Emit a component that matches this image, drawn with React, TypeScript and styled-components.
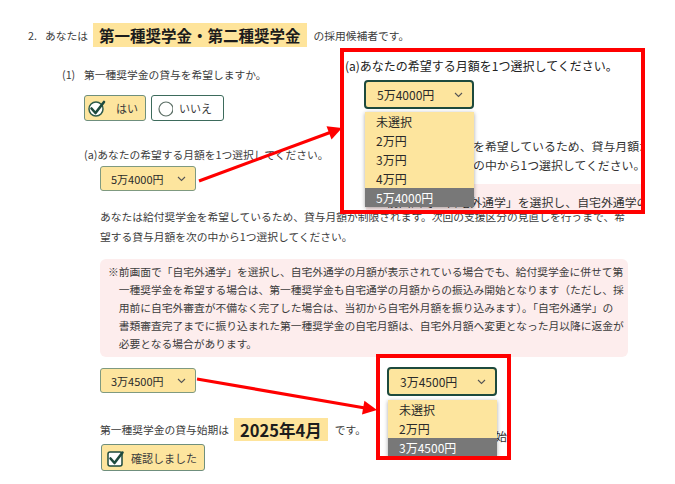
import React from "react";
import styled, { createGlobalStyle } from "styled-components";

const GlobalStyle = createGlobalStyle`
  html, body {
    margin: 0;
    padding: 0;
    background: #fff;
  }
  body {
    font-family: "Noto Sans CJK JP", "Noto Sans", sans-serif;
    color: #3c3c3c;
  }
`;

const YELLOW = "#fde59e";
const DARK_GREEN = "#1d4a3d";

const Screen = styled.div`
  position: relative;
  width: 675px;
  height: 484px;
  overflow: hidden;
  background: #fff;
`;

const Page = styled.div`
  padding: 23px 0 0 28px;
  font-size: 10.75px;
  white-space: nowrap;
`;

const Header = styled.div`
  display: flex;
  align-items: center;
  height: 24px;
`;

const ItemNumber = styled.span`
  width: 17px;
`;

const Highlight = styled.span<{ $size: number; $height: number }>`
  display: inline-flex;
  align-items: center;
  height: ${(p) => p.$height}px;
  padding: 0 6px;
  margin: 0 7px 0 5px;
  background: #fee49b;
  color: #1c1c1c;
  font-weight: 700;
  font-size: ${(p) => p.$size}px;
`;

const Section = styled.div`
  padding-left: 34px;
`;

const QuestionLine = styled.div`
  margin-top: 19px;
  line-height: 18px;
`;

const QuestionNumber = styled.span`
  display: inline-block;
  width: 22px;
`;

const Choices = styled.div`
  display: flex;
  gap: 5px;
  margin: 11px 0 0 22px;
`;

const ChoiceButton = styled.div<{ $selected?: boolean; $width: number }>`
  display: flex;
  align-items: center;
  gap: 6px;
  box-sizing: border-box;
  width: ${(p) => p.$width}px;
  height: 26px;
  padding-left: 3px;
  border: 1px solid ${(p) => (p.$selected ? "#6f8f7d" : "#3d6b5c")};
  border-radius: 3px;
  background: ${(p) => (p.$selected ? YELLOW : "#fff")};
  font-size: 11px;
`;

const SubQuestion = styled.div`
  margin: 25px 0 0 22px;
  line-height: 18px;
`;

const Body = styled.div`
  margin-left: 38px;
`;

const SelectSlot = styled.div<{ $top: number }>`
  margin-top: ${(p) => p.$top}px;
`;

const SelectBox = styled.div<{ $open?: boolean }>`
  display: flex;
  align-items: center;
  justify-content: space-between;
  box-sizing: border-box;
  width: ${(p) => (p.$open ? 110 : 96)}px;
  height: ${(p) => (p.$open ? 29 : 25)}px;
  padding: ${(p) => (p.$open ? "0 9px 0 11px" : "0 9px 0 10px")};
  background: ${YELLOW};
  border: ${(p) => (p.$open ? `2px solid ${DARK_GREEN}` : "1px solid #7f9a80")};
  border-radius: ${(p) => (p.$open ? 4 : 3)}px;
  font-size: ${(p) => (p.$open ? 12 : 11)}px;
  color: #2a2a2a;
`;

const Paragraph = styled.p`
  margin: 16px 0 0;
  line-height: 20px;
`;

const Notice = styled.div`
  box-sizing: border-box;
  width: 528px;
  margin-top: 12px;
  padding: 4px 8px 4px calc(8px + 1em);
  text-indent: -1em;
  line-height: 18px;
  background: #fdeded;
  border-radius: 6px;
`;

const StartLine = styled.div`
  display: flex;
  align-items: center;
  margin-top: 25px;
`;

const ConfirmButton = styled.div`
  display: flex;
  align-items: center;
  gap: 4px;
  box-sizing: border-box;
  width: 104px;
  height: 27px;
  margin: 3px 0 0 1px;
  padding-left: 5px;
  background: ${YELLOW};
  border: 1px solid #6f8f7d;
  border-radius: 3px;
  font-size: 11px;
`;

const Callout = styled.div<{ $left: number; $top: number; $width: number; $height: number }>`
  position: absolute;
  left: ${(p) => p.$left}px;
  top: ${(p) => p.$top}px;
  width: ${(p) => p.$width}px;
  height: ${(p) => p.$height}px;
  box-sizing: border-box;
  border: 4px solid #ff0000;
  background: #fff;
  overflow: hidden;
  white-space: nowrap;
  color: #222;
  font-size: 11.9px;
`;

const CalloutTitle = styled.div`
  margin: 5px 0 0 1px;
  line-height: 18px;
  font-size: 12px;
`;

const CalloutSelect = styled.div<{ $top: number; $left: number }>`
  margin: ${(p) => p.$top}px 0 0 ${(p) => p.$left}px;
`;

const ZoomParagraph = styled.div<{ $top: number; $left: number }>`
  margin: ${(p) => p.$top}px 0 0 ${(p) => p.$left}px;
  line-height: 19px;
  color: #333;
`;

const ZoomNotice = styled.div`
  margin: 10px 0 0 22px;
  padding: 8px 9px;
  line-height: 19px;
  background: #fdeded;
  color: #333;
`;

const Menu = styled.ul<{ $left: number; $top: number }>`
  position: absolute;
  left: ${(p) => p.$left}px;
  top: ${(p) => p.$top}px;
  width: 109px;
  margin: 0;
  padding: 0;
  list-style: none;
  background: ${YELLOW};
  box-shadow: 0 1px 4px rgba(0, 0, 0, 0.35);
`;

const MenuItem = styled.li<{ $selected?: boolean }>`
  height: 19px;
  line-height: 19px;
  padding-left: 11px;
  font-size: 12px;
  background: ${(p) => (p.$selected ? "#787878" : "transparent")};
  color: ${(p) => (p.$selected ? "#fff" : "#2a2a2a")};
`;

const Arrows = styled.svg`
  position: absolute;
  left: 0;
  top: 0;
  pointer-events: none;
`;

const Chevron = () => (
  <svg width="9" height="6" viewBox="0 0 9 6">
    <polyline points="1,1 4.5,4.5 8,1" fill="none" stroke="#555" strokeWidth="1.1" />
  </svg>
);

const CheckCircle = () => (
  <svg width="22" height="18" viewBox="0 0 22 18">
    <circle cx="8" cy="10" r="7" fill="#fff" stroke="#2d5a4a" strokeWidth="1.5" />
    <path d="M3.5 9.5 L7.5 14 L16 3" fill="none" stroke={DARK_GREEN} strokeWidth="2.6" strokeLinecap="round" strokeLinejoin="round" />
  </svg>
);

const EmptyCircle = () => (
  <svg width="18" height="18" viewBox="0 0 18 18">
    <circle cx="11" cy="10" r="7" fill="#fff" stroke="#5c6f66" strokeWidth="1.2" />
  </svg>
);

const CheckBox = () => (
  <svg width="20" height="18" viewBox="0 0 20 18">
    <rect x="1" y="3" width="14" height="14" rx="2" fill="#fff" stroke={DARK_GREEN} strokeWidth="1.5" />
    <path d="M3.5 9.5 L7.5 14 L15.5 3.5" fill="none" stroke={DARK_GREEN} strokeWidth="2.6" strokeLinecap="round" strokeLinejoin="round" />
  </svg>
);

const Select: React.FC<{ value: string; open?: boolean }> = ({ value, open }) => (
  <SelectBox $open={open}>
    <span>{value}</span>
    <Chevron />
  </SelectBox>
);

export default function App() {
  return (
    <Screen>
      <GlobalStyle />
      <Page>
        <Header>
          <ItemNumber>2.</ItemNumber>
          <span>あなたは</span>
          <Highlight $size={15.5} $height={24}>
            第一種奨学金・第二種奨学金
          </Highlight>
          <span>の採用候補者です。</span>
        </Header>
        <Section>
          <QuestionLine>
            <QuestionNumber>(1)</QuestionNumber>第一種奨学金の貸与を希望しますか。
          </QuestionLine>
          <Choices>
            <ChoiceButton $selected $width={62}>
              <CheckCircle />
              はい
            </ChoiceButton>
            <ChoiceButton $width={73}>
              <EmptyCircle />
              いいえ
            </ChoiceButton>
          </Choices>
          <SubQuestion>(a)あなたの希望する月額を1つ選択してください。</SubQuestion>
          <Body>
            <SelectSlot $top={2}>
              <Select value="5万4000円" />
            </SelectSlot>
            <Paragraph>
              あなたは給付奨学金を希望しているため、貸与月額が制限されます。次回の支援区分の見直しを行うまで、希
              <br />
              望する貸与月額を次の中から1つ選択してください。
            </Paragraph>
            <Notice>
              ※前画面で「自宅外通学」を選択し、自宅外通学の月額が表示されている場合でも、給付奨学金に併せて第
              <br />
              一種奨学金を希望する場合は、第一種奨学金も自宅通学の月額からの振込み開始となります（ただし、採
              <br />
              用前に自宅外審査が不備なく完了した場合は、当初から自宅外月額を振り込みます）。「自宅外通学」の
              <br />
              書類審査完了までに振り込まれた第一種奨学金の自宅月額は、自宅外月額へ変更となった月以降に返金が
              <br />
              必要となる場合があります。
            </Notice>
            <SelectSlot $top={11}>
              <Select value="3万4500円" />
            </SelectSlot>
            <StartLine>
              <span>第一種奨学金の貸与始期は</span>
              <Highlight $size={16.5} $height={23}>
                2025年4月
              </Highlight>
              <span>です。</span>
            </StartLine>
            <ConfirmButton>
              <CheckBox />
              確認しました
            </ConfirmButton>
          </Body>
        </Section>
      </Page>

      <Callout $left={340} $top={48} $width={305} $height={166}>
        <CalloutTitle>(a)あなたの希望する月額を1つ選択してください。</CalloutTitle>
        <CalloutSelect $top={5} $left={20}>
          <Select value="5万4000円" open />
        </CalloutSelect>
        <ZoomParagraph $top={27} $left={22}>
          あなたは給付奨学金を希望しているため、貸与月額が制限されます。
          <br />
          望する貸与月額を次の中から1つ選択してください。
        </ZoomParagraph>
        <ZoomNotice>※前画面で「自宅外通学」を選択し、自宅外通学の月額が表示されている場合でも</ZoomNotice>
        <Menu $left={21} $top={60}>
          <MenuItem>未選択</MenuItem>
          <MenuItem>2万円</MenuItem>
          <MenuItem>3万円</MenuItem>
          <MenuItem>4万円</MenuItem>
          <MenuItem $selected>5万4000円</MenuItem>
        </Menu>
      </Callout>

      <Callout $left={376} $top={354} $width={135} $height={106}>
        <CalloutSelect $top={9} $left={7}>
          <Select value="3万4500円" open />
        </CalloutSelect>
        <ZoomParagraph $top={30} $left={8}>
          第一種奨学金の貸与始期は
        </ZoomParagraph>
        <Menu $left={8} $top={42}>
          <MenuItem>未選択</MenuItem>
          <MenuItem>2万円</MenuItem>
          <MenuItem $selected>3万4500円</MenuItem>
        </Menu>
      </Callout>

      <Arrows width="675" height="484" viewBox="0 0 675 484">
        <line x1="199" y1="181" x2="330" y2="132.5" stroke="#ff0000" strokeWidth="3.2" />
        <polygon points="342,128 331.5,139.5 326.5,126.3" fill="#ff0000" />
        <line x1="197" y1="379" x2="365" y2="408" stroke="#ff0000" strokeWidth="3.2" />
        <polygon points="377,410 362,414.5 364.4,400.7" fill="#ff0000" />
      </Arrows>
    </Screen>
  );
}
